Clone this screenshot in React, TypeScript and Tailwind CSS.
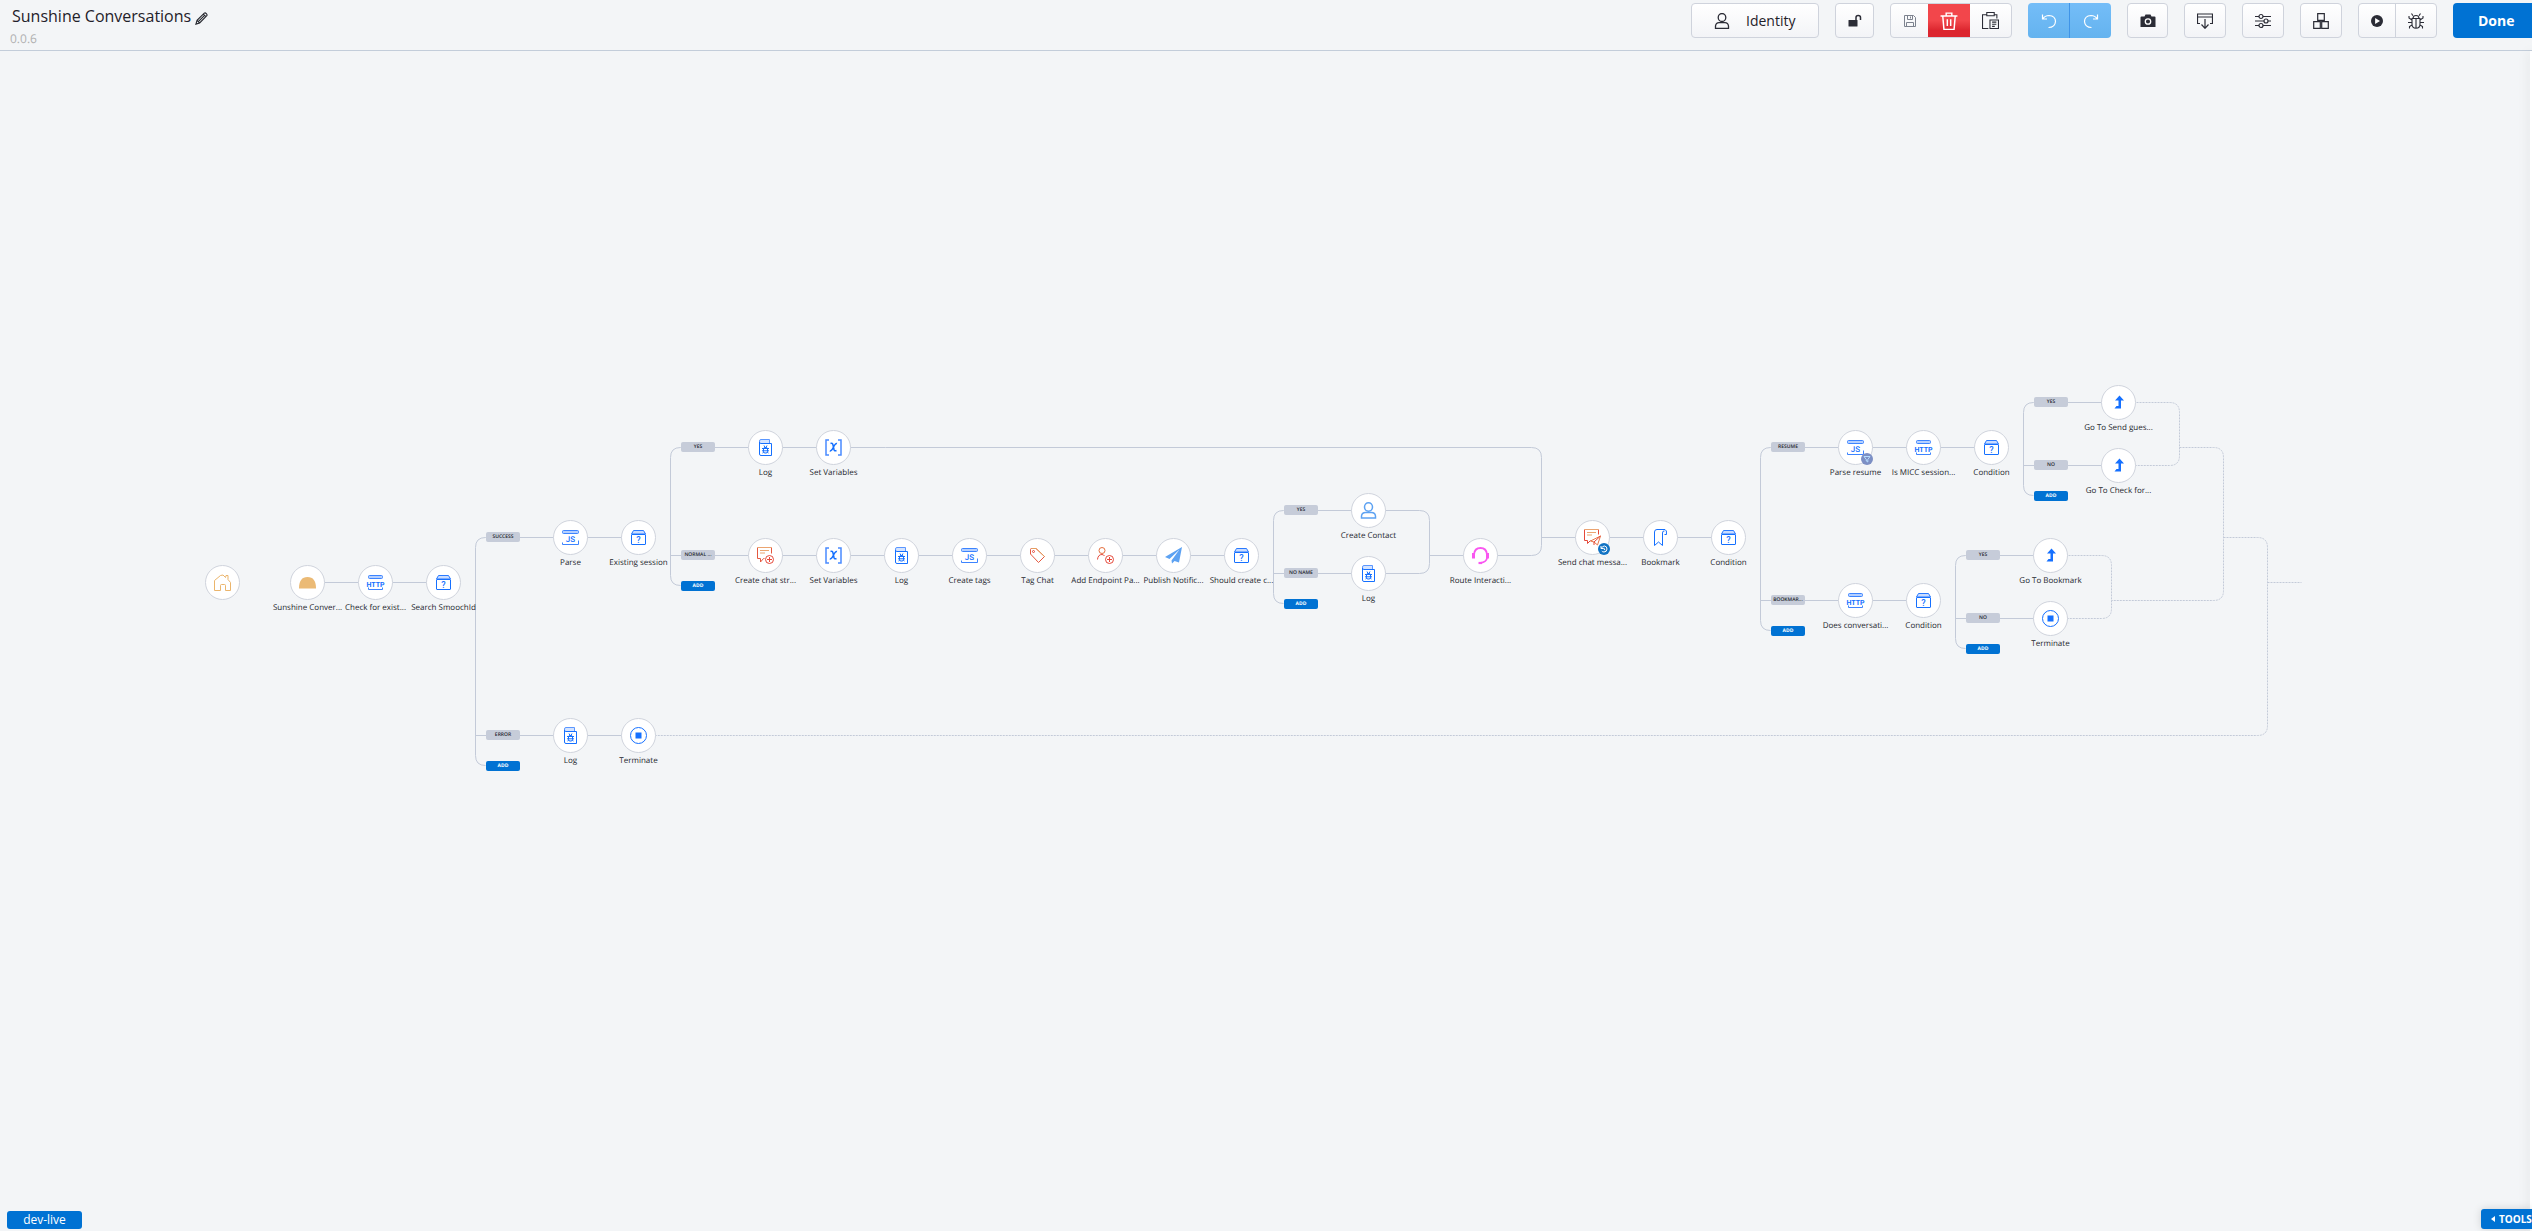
import type { ReactNode } from "react";

type IconName =
  | "home" | "dome" | "http" | "cond" | "js" | "log" | "stop" | "vars" | "chatPlus"
  | "tag" | "userPlus" | "plane" | "user" | "headset" | "chatSend" | "bookmark" | "goto";

type FlowNode = { x: number; y: number; icon: IconName; label?: string; badge?: "retry" | "filter" };

const nodes: FlowNode[] = [
  { x: 222, y: 531, icon: "home" },
  { x: 307, y: 531, icon: "dome", label: "Sunshine Conver..." },
  { x: 375, y: 531, icon: "http", label: "Check for exist..." },
  { x: 443, y: 531, icon: "cond", label: "Search SmoochId" },
  { x: 570, y: 486, icon: "js", label: "Parse" },
  { x: 638, y: 486, icon: "cond", label: "Existing session" },
  { x: 570, y: 684, icon: "log", label: "Log" },
  { x: 638, y: 684, icon: "stop", label: "Terminate" },
  { x: 765, y: 396, icon: "log", label: "Log" },
  { x: 833, y: 396, icon: "vars", label: "Set Variables" },
  { x: 765, y: 504, icon: "chatPlus", label: "Create chat str..." },
  { x: 833, y: 504, icon: "vars", label: "Set Variables" },
  { x: 901, y: 504, icon: "log", label: "Log" },
  { x: 969, y: 504, icon: "js", label: "Create tags" },
  { x: 1037, y: 504, icon: "tag", label: "Tag Chat" },
  { x: 1105, y: 504, icon: "userPlus", label: "Add Endpoint Pa..." },
  { x: 1173, y: 504, icon: "plane", label: "Publish Notific..." },
  { x: 1241, y: 504, icon: "cond", label: "Should create c..." },
  { x: 1368, y: 459, icon: "user", label: "Create Contact" },
  { x: 1368, y: 522, icon: "log", label: "Log" },
  { x: 1480, y: 504, icon: "headset", label: "Route Interacti..." },
  { x: 1592, y: 486, icon: "chatSend", label: "Send chat messa...", badge: "retry" },
  { x: 1660, y: 486, icon: "bookmark", label: "Bookmark" },
  { x: 1728, y: 486, icon: "cond", label: "Condition" },
  { x: 1855, y: 396, icon: "js", label: "Parse resume", badge: "filter" },
  { x: 1923, y: 396, icon: "http", label: "Is MICC session..." },
  { x: 1991, y: 396, icon: "cond", label: "Condition" },
  { x: 1855, y: 549, icon: "http", label: "Does conversati..." },
  { x: 1923, y: 549, icon: "cond", label: "Condition" },
  { x: 2118, y: 351, icon: "goto", label: "Go To Send gues..." },
  { x: 2118, y: 414, icon: "goto", label: "Go To Check for..." },
  { x: 2050, y: 504, icon: "goto", label: "Go To Bookmark" },
  { x: 2050, y: 567, icon: "stop", label: "Terminate" },
];

type Branch = { x: number; rows: { y: number; label: string; to: number }[] };

const branches: Branch[] = [
  { x: 475, rows: [{ y: 486, label: "SUCCESS", to: 570 }, { y: 684, label: "ERROR", to: 570 }] },
  { x: 670, rows: [{ y: 396, label: "YES", to: 765 }, { y: 504, label: "NORMAL ...", to: 765 }] },
  { x: 1273, rows: [{ y: 459, label: "YES", to: 1368 }, { y: 522, label: "NO NAME", to: 1368 }] },
  { x: 1760, rows: [{ y: 396, label: "RESUME", to: 1855 }, { y: 549, label: "BOOKMAR...", to: 1855 }] },
  { x: 2023, rows: [{ y: 351, label: "YES", to: 2118 }, { y: 414, label: "NO", to: 2118 }] },
  { x: 1955, rows: [{ y: 504, label: "YES", to: 2050 }, { y: 567, label: "NO", to: 2050 }] },
];

const chains = [
  "M307 531H443", "M570 486H638", "M570 684H638", "M765 396H885", "M765 504H1241",
  "M1429 504H1480", "M1541 486H1728", "M1855 396H1991", "M1855 549H1923",
  "M1368 459H1419Q1429 459 1429 469V512Q1429 522 1419 522H1368",
  "M885 396H1531Q1541 396 1541 406V494Q1541 504 1531 504H1480",
];

const dotted = [
  "M2118 351H2169Q2179 351 2179 361V404Q2179 414 2169 414H2118",
  "M2050 504H2101Q2111 504 2111 514V557Q2111 567 2101 567H2050",
  "M2179 396H2213Q2223 396 2223 406V539Q2223 549 2213 549H2111",
  "M2223 486H2257Q2267 486 2267 496V674Q2267 684 2257 684H638",
  "M2267 531H2301",
];

function branchPath({ x, rows }: Branch) {
  const [first, last] = rows;
  const end = last.y + 30;
  return (
    `M${first.to} ${first.y}H${x + 10}Q${x} ${first.y} ${x} ${first.y + 10}V${end - 10}Q${x} ${end} ${x + 10} ${end}` +
    `M${x} ${last.y}H${last.to}`
  );
}

const glyphs: Record<IconName, ReactNode> = {
  home: <path d="M0.5 16.5V6.5L6.5 1.5L9 1L11.500 3.500L12 1.500H14V5.500L16.500 8.500V16.500H11.500V11.500Q11.500 10.500 10.500 10.500H7.500Q6.500 10.500 6.500 11.500V16.500Z" stroke="#ebb56c" />,
  dome: <path d="M0 14.500Q0 3 8.500 3Q17 3 17 14.500Z" fill="#ebba75" />,
  http: (
    <>
      <rect x="1.500" y="1.500" width="14" height="3" rx="1" fill="#b5d0ff" stroke="#3d84ff" />
      <path d="M1.500 13.500V15.500H15.500V13.500" stroke="#3d84ff" />
      <text x="8.500" y="12.500" fontSize="7" textAnchor="middle" className="font-['Roboto',sans-serif] font-bold [text-rendering:geometricPrecision]" fill="#1570ff">HTTP</text>
    </>
  ),
  js: (
    <>
      <rect x="0.500" y="1.500" width="16" height="3" rx="1" fill="#b5d0ff" stroke="#3d84ff" />
      <path d="M16.500 11.500V15.500H0.500V13.500" stroke="#3d84ff" />
      <text x="8.500" y="12.500" fontSize="8" textAnchor="middle" className="font-['Roboto',sans-serif] font-medium [text-rendering:geometricPrecision]" fill="#1570ff">JS</text>
    </>
  ),
  cond: (
    <>
      <path d="M1.500 5L3.500 1.500H13.500L15.500 5Z" stroke="#2a7aff" fill="#c9dcff" />
      <rect x="1.500" y="5.500" width="14" height="10" rx="0.500" stroke="#1570ff" fill="#fff" />
      <text x="8.500" y="14" fontSize="9" textAnchor="middle" className="font-['Roboto'] font-medium" fill="#1570ff">?</text>
    </>
  ),
  log: (
    <>
      <path d="M2.500 3V2Q2.500 0.500 4 0.500H12.500V4.500H4Q2.500 4.500 2.500 3" stroke="#5b97ff" fill="#d5e4ff" />
      <path d="M2.500 3V15Q2.500 16.500 4 16.500H14.500V4.500H3.500" stroke="#1570ff" />
      <path d="M7 6.500L7.800 8M10 6.500L9.200 8M5 9.500H12M5 11.800H12M5.500 14L7 12.800M11.500 14L10 12.800" stroke="#1570ff" />
      <rect x="6.500" y="8.500" width="4" height="5.500" rx="1.500" stroke="#1570ff" />
    </>
  ),
  stop: (
    <>
      <circle cx="8.500" cy="8.500" r="8" stroke="#1570ff" />
      <rect x="5.500" y="5.500" width="6" height="6" fill="#1570ff" />
    </>
  ),
  vars: (
    <>
      <path d="M4 1H1V16H4" stroke="#4a8bff" strokeWidth="1.500" />
      <path d="M13 1H16V16H13" stroke="#4a8bff" strokeWidth="1.500" />
      <path d="M5.500 4.500Q7.500 3.500 8 6L9 10.500Q9.500 12.500 11.500 11.500M12 4.500Q10.500 4 8.500 8Q6.500 12.500 4.800 11.800" stroke="#1570ff" strokeWidth="1.500" />
    </>
  ),
  chatPlus: (
    <>
      <path d="M7.500 11.500H6.500L3.500 15V11.500H0.500V0.500M14.500 0.500V6.500" stroke="#e5583f" />
      <path d="M0.500 0.500H14.500M3 3.500H12M3 6H8" stroke="#eba470" />
      <circle cx="12.500" cy="12.500" r="4" stroke="#e5483a" />
      <path d="M12.500 10V15M10 12.500H15" stroke="#e5483a" />
    </>
  ),
  tag: (
    <>
      <path d="M1.500 7V2.500Q1.500 1.500 2.500 1.500H7L15.500 9.500L9.500 15.500Z" stroke="#e5583f" />
      <path d="M2.500 1.500H7L15.500 9.500" stroke="#e5a060" />
      <circle cx="4.500" cy="4.500" r="1" stroke="#e5483a" />
    </>
  ),
  userPlus: (
    <>
      <circle cx="5" cy="3.500" r="3" stroke="#e5703f" />
      <path d="M0.500 12.500Q1 7.500 5 7.500Q6.500 7.500 7.500 9" stroke="#e5483a" />
      <circle cx="12.500" cy="12.500" r="4" stroke="#e5483a" />
      <path d="M12.500 10V15M10 12.500H15" stroke="#e5483a" />
    </>
  ),
  plane: <path d="M17 0L0 10L4.500 12L14.500 2.500L6.500 13.500L7 16.500L9.500 14L14 15.500Z" fill="#5da2f2" />,
  user: (
    <>
      <ellipse cx="8.500" cy="5" rx="4" ry="4.300" stroke="#5da2f2" strokeWidth="1.500" />
      <path d="M1.500 16V14Q2 10.500 5.500 10.500H11.500Q15 10.500 15.500 14V16Z" stroke="#5da2f2" strokeWidth="1.500" />
    </>
  ),
  headset: (
    <>
      <path d="M2 7.500Q2.500 1 8.500 1Q14.500 1 15 7.500V11Q14.500 15 8.500 16" stroke="#f957f0" strokeWidth="1.800" />
      <path d="M1.500 6V11.500M15.500 6V11.500" stroke="#f957f0" strokeWidth="3" />
      <path d="M6.500 16H10" stroke="#f957f0" strokeWidth="2.200" />
    </>
  ),
  chatSend: (
    <>
      <path d="M6.500 11.500L3.500 14.500V11.500H0.500V0.500M14.500 0.500V5.500" stroke="#e5483a" />
      <path d="M0.500 0.500H14.500M3 3.500H12M3 6H8" stroke="#eba470" />
      <path d="M16.500 7L6.500 12L10 13L13.500 16Z" stroke="#e8754a" />
      <path d="M16.500 7L10 13V16" stroke="#e5483a" />
    </>
  ),
  bookmark: (
    <>
      <path d="M12.500 2Q10.500 1.500 10.500 4V16.500L6.500 13L2.500 16.500V3Q2.500 0.500 5 0.500H13" stroke="#1570ff" />
      <path d="M13 0.500Q15 1 14.500 5.500H12.500" stroke="#1570ff" />
    </>
  ),
  goto: <path d="M9.500 1.500L14 6.500H11V14.500H4.500L6.500 12H8.500V6.500H5Z" fill="#1570ff" />,
};

function NodeBadge({ kind }: { kind: "retry" | "filter" }) {
  return kind === "retry" ? (
    <span className="absolute left-[22px] top-[22px] flex size-3 items-center justify-center rounded-full bg-[#1173c4]">
      <svg viewBox="0 0 12 12" fill="none" stroke="#fff" className="size-3">
        <path d="M3 3V5.500H5.500M3.300 5.300Q4.500 3 6.500 3Q9 3.300 9 6Q8.800 9 6 9Q4.500 9 3.800 8M6 4.800V6.300L7.300 7" />
      </svg>
    </span>
  ) : (
    <span className="absolute left-[22px] top-[22px] flex size-3 items-center justify-center rounded-full bg-[#7c8fc4]">
      <svg viewBox="0 0 12 12" fill="none" stroke="#b5dcff" className="size-3">
        <path d="M3 3.500H9L6.800 6.500V9L5.300 8V6.500Z" />
      </svg>
    </span>
  );
}

function Node({ x, y, icon, label, badge }: FlowNode) {
  return (
    <div className="absolute flex w-[81px] flex-col items-center" style={{ left: x - 40, top: y - 17 }}>
      <button
        type="button"
        aria-label={label ?? "Start"}
        className="relative flex size-[35px] items-center justify-center rounded-full border border-[#d0d4dd] bg-white"
      >
        <svg viewBox="0 0 17 17" fill="none" className="size-[17px] overflow-visible">
          {glyphs[icon]}
        </svg>
        {badge && <NodeBadge kind={badge} />}
      </button>
      {label && (
        <span className="mt-[2px] text-[8px] leading-[11px] whitespace-nowrap text-[#24262d] [text-rendering:geometricPrecision]">
          {label}
        </span>
      )}
    </div>
  );
}

function BranchTags({ x, rows }: Branch) {
  const last = rows[rows.length - 1];
  return (
    <>
      {rows.map((row) => (
        <span
          key={row.y}
          className="absolute flex h-[10px] w-[34px] items-center justify-center rounded-[2px] bg-[#c6ccd9] text-[5px] leading-none font-semibold whitespace-nowrap text-[#24262d] [text-rendering:geometricPrecision]"
          style={{ left: x + 11, top: row.y - 5 }}
        >
          {row.label}
        </span>
      ))}
      <button
        type="button"
        className="absolute flex h-[10px] w-[34px] items-center justify-center rounded-[2px] bg-[#0072d3] text-[5px] leading-none font-bold text-white [text-rendering:geometricPrecision]"
        style={{ left: x + 11, top: last.y + 26 }}
      >
        ADD
      </button>
    </>
  );
}

const frame = "flex h-[35px] rounded-[4px] border border-[#cfd3dc] bg-linear-to-b from-white to-[#f3f4f7]";
const cell = "flex w-10 items-center justify-center";

function Svg({ children, className = "size-4" }: { children: ReactNode; className?: string }) {
  return (
    <svg viewBox="0 0 16 16" fill="none" stroke="currentColor" className={className}>
      {children}
    </svg>
  );
}

function Single({ label, children }: { label: string; children: ReactNode }) {
  return (
    <div className={frame}>
      <button type="button" aria-label={label} className={cell}>{children}</button>
    </div>
  );
}

function Toolbar() {
  return (
    <div className="flex shrink-0 gap-4 pt-[3px] text-[#2b2c36]">
      <button type="button" className={`${frame} w-32 items-center pl-[22px]`}>
        <Svg>
          <ellipse cx="8" cy="4.500" rx="3.800" ry="4" strokeWidth="1.300" />
          <path d="M1.500 15.300V13Q2 9.700 5 9.700H11Q14 9.700 14.500 13V15.300Z" strokeWidth="1.300" />
        </Svg>
        <span className="ml-4 text-[14px] leading-5 font-medium text-[#1f2129]">Identity</span>
      </button>
      <div className={frame}>
        <button type="button" aria-label="Unlock" className="flex w-[37px] items-center justify-center">
          <Svg>
            <rect x="1.500" y="7" width="9" height="6.500" rx="0.500" fill="currentColor" stroke="none" />
            <path d="M9 7V4.500Q9 2.500 11.200 2.500Q13.500 2.500 13.500 4.500V7" strokeWidth="1.500" />
          </Svg>
        </button>
      </div>
      <div className={frame}>
        <button type="button" aria-label="Save" className="flex w-[37px] items-center justify-center text-[#7c828e]">
          <Svg>
            <path d="M2.500 2.500H11.500L13.500 4.500V13.500H2.500ZM5.500 2.500V6.500H10.500V2.500M8.500 3.500V5.500M4.500 13.500V9.500H11.500V13.500" />
          </Svg>
        </button>
        <button type="button" aria-label="Delete" className="flex w-[42px] items-center justify-center bg-linear-to-b from-[#f2464b] from-50% to-[#dc252f] to-80% text-white">
          <Svg className="size-[18px]">
            <path d="M0.500 3.500H15.500M5.500 3V1H10.500V3M2.500 4L3.500 15.500H12.500L13.500 4M6.500 6.500V12.500M9.500 6.500V12.500" strokeWidth="1.300" />
          </Svg>
        </button>
        <button type="button" aria-label="Paste" className="flex w-[41px] items-center justify-center">
          <Svg className="size-[17px]">
            <path d="M4 2.500H0.500V15.500H6M12 2.500H14V6M4.500 0.500H11.500V3.500H4.500ZM7.500 7.500H15.500V15.500H7.500ZM9.500 9.500H13.500M9.500 11.500H13.500M9.500 13.500H12" />
          </Svg>
        </button>
      </div>
      <div className="flex h-[35px] overflow-hidden rounded-[4px] bg-linear-to-b from-[#74bdf8] to-[#64b3ef] text-white">
        <button type="button" aria-label="Undo" className="flex w-[42px] items-center justify-center border-r border-[#3f94e8]">
          <Svg>
            <path d="M1.500 1.500V6H6M1.800 5.800Q4 2.500 8 2.500Q14.500 3 14.500 8.500Q14 14.500 7.500 14.500" strokeWidth="1.200" />
          </Svg>
        </button>
        <button type="button" aria-label="Redo" className="flex w-[41px] items-center justify-center">
          <Svg>
            <path d="M14.500 1.500V6H10M14.200 5.800Q12 2.500 8 2.500Q1.500 3 1.500 8.500Q2 14.500 8.500 14.500" strokeWidth="1.200" />
          </Svg>
        </button>
      </div>
      <div className={frame}>
        <button type="button" aria-label="Snapshot" className="flex w-[39px] items-center justify-center">
          <Svg>
            <path d="M1.500 3.500H4.500L5.500 1.500H10.500L11.500 3.500H14.500Q15.500 3.500 15.500 4.500V14H0.500V4.500Q0.500 3.500 1.500 3.500Z" fill="currentColor" stroke="none" />
            <circle cx="8" cy="8.500" r="2.700" stroke="#fff" strokeWidth="1.300" />
          </Svg>
        </button>
      </div>
      <Single label="Import">
        <Svg>
          <path d="M3 10.500H0.500V1H15.500V10.500H13M0.500 4H15.500M8 6V15M4.500 11.500L8 15.300L11.500 11.500" strokeWidth="1.200" />
        </Svg>
      </Single>
      <Single label="Settings">
        <Svg>
          <path d="M0 3.500H4M8 3.500H16M0 8H9M13 8H16M0 12.500H4M8 12.500H16" strokeWidth="1.200" />
          <circle cx="6" cy="3.500" r="2" strokeWidth="1.200" />
          <circle cx="11" cy="8" r="2" strokeWidth="1.200" />
          <circle cx="6" cy="12.500" r="2" strokeWidth="1.200" />
        </Svg>
      </Single>
      <Single label="Modules">
        <Svg>
          <path d="M4.700 0.700H11.300V7.300H4.700ZM0.700 8.700H7.300V15.300H0.700ZM8.700 8.700H15.300V15.300H8.700Z" strokeWidth="1.200" />
        </Svg>
      </Single>
      <div className={frame}>
        <button type="button" aria-label="Run" className="flex w-9 items-center justify-center">
          <Svg className="size-3">
            <circle cx="8" cy="8" r="8" fill="currentColor" stroke="none" />
            <path d="M5.500 4L12 8L5.500 12Z" fill="#fff" stroke="none" />
          </Svg>
        </button>
        <button type="button" aria-label="Debug" className="flex w-[41px] items-center justify-center border-l border-[#cfd3dc]">
          <Svg>
            <path d="M4 5.500H12V11Q12 15.300 8 15.300Q4 15.300 4 11ZM5 5.500Q5 2.500 8 2.500Q11 2.500 11 5.500M8 6V15M5 2.800L3.500 0.500M11 2.800L12.500 0.500M4 7L1 5V3M12 7L15 5V3M4 9.500H0M12 9.500H16M4 12L1.500 13.500V15.500M12 12L14.500 13.500V15.500" strokeWidth="1.100" />
          </Svg>
        </button>
      </div>
      <button type="button" className="h-[35px] w-[79px] rounded-l-[4px] bg-[#0072d3] pl-[25px] text-left text-[14px] font-bold text-white">
        Done
      </button>
    </div>
  );
}

export default function App() {
  return (
    <div className="flex min-h-screen flex-col overflow-hidden bg-[#f3f5f7] font-['Open_Sans',sans-serif]">
      <header className="flex h-[51px] shrink-0 items-start justify-between border-b border-[#c3cdda]">
        <div className="flex flex-col">
          <div className="flex items-center gap-1 pt-1 pl-3">
            <h1 className="text-[16px] leading-6 text-[#1f2129]">Sunshine Conversations</h1>
            <button type="button" aria-label="Rename">
              <svg viewBox="0 0 14 14" fill="none" stroke="#24262d" strokeWidth="1.200" className="mt-1 size-[13px]">
                <path d="M1 13L2.200 9L10 1.200Q11 0.500 12.200 1.700Q13.500 3 12.700 4L5 11.800ZM2.200 9L5 11.800M9 2.300L11.700 5M3.600 10.400L10.300 3.700" />
              </svg>
            </button>
          </div>
          <span className="mt-[3px] pl-[10px] text-[12px] leading-4 text-[#b0b0b0] [text-rendering:geometricPrecision]">0.0.6</span>
        </div>
        <Toolbar />
      </header>

      <main className="relative flex-1">
        <svg fill="none" className="absolute inset-0 size-full" aria-hidden="true">
          <g transform="translate(0.5 0.5)" stroke="#c3cad8">
            {chains.map((d) => <path key={d} d={d} />)}
            {branches.map((b) => <path key={b.x} d={branchPath(b)} />)}
            {dotted.map((d) => <path key={d} d={d} strokeDasharray="2 1" />)}
          </g>
        </svg>
        {branches.map((b) => <BranchTags key={b.x} {...b} />)}
        {nodes.map((n) => <Node key={`${n.x}-${n.y}`} {...n} />)}
        <aside className="absolute inset-y-0 right-0 w-[2px] bg-white shadow-[0_0_12px_rgba(0,0,0,0.2)]" />
        <span className="absolute bottom-[2px] left-[7px] h-[18px] w-[75px] rounded-[3px] bg-[#0072d3] text-center text-[12px] leading-[18px] text-white">
          dev-live
        </span>
        <button type="button" className="absolute right-0 bottom-[2px] flex h-5 w-[51px] items-center gap-1 rounded-l-[3px] bg-[#0072d3] pl-[10px] text-[10px] font-bold text-white shadow-[0_0_8px_rgba(0,0,0,0.15)]">
          <svg viewBox="0 0 4 6" fill="currentColor" className="h-[6px] w-1 shrink-0"><path d="M4 0V6L0 3Z" /></svg>
          TOOLS
        </button>
      </main>
    </div>
  );
}
